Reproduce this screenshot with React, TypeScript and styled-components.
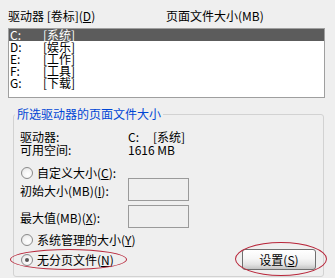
import styled, { createGlobalStyle } from "styled-components";

const GlobalStyle = createGlobalStyle`
  html, body {
    margin: 0;
    padding: 0;
    background: #efefef;
  }
  body {
    font-family: "Noto Sans CJK SC", "Liberation Sans", sans-serif;
    font-size: 12px;
    color: #000000;
  }
`;

const Dialog = styled.div`
  width: 335px;
  height: 278px;
  box-sizing: border-box;
  padding: 9px 10px 0 8px;
  background: #efefef;
`;

const HeaderRow = styled.div`
  display: grid;
  grid-template-columns: 158px 1fr;
  height: 13px;
  line-height: 13px;
  margin-bottom: 6px;
  white-space: nowrap;
`;

const ListBox = styled.div`
  height: 70px;
  box-sizing: border-box;
  border: 1px solid #9f9f9f;
  background: #ffffff;
`;

const ListRow = styled.div<{ $selected?: boolean }>`
  display: grid;
  grid-template-columns: 33px 1fr;
  height: 12px;
  line-height: 12px;
  padding-left: 1px;
  white-space: nowrap;
  background: ${(p) => (p.$selected ? "#5c5c5c" : "transparent")};
  color: ${(p) => (p.$selected ? "#ffffff" : "#000000")};
`;

const Group = styled.fieldset`
  margin: 9px 1px 0 5px;
  padding: 0 7px 6px 6px;
  border: 1px solid #d2d2d2;
  border-radius: 3px;
  min-inline-size: 0;
`;

const GroupTitle = styled.legend`
  margin-left: -5px;
  padding: 0 2px;
  line-height: 14px;
  color: #0046d5;
`;

const InfoGrid = styled.div`
  display: grid;
  grid-template-columns: 108px 1fr;
  grid-auto-rows: 13px;
  line-height: 13px;
  margin-top: 9px;
  white-space: nowrap;
`;

const DriveLetter = styled.span`
  display: inline-block;
  width: 25px;
`;

const RadioRow = styled.div<{ $gap: number }>`
  display: flex;
  align-items: center;
  height: 12px;
  margin-top: ${(p) => p.$gap}px;
`;

const RadioLabel = styled.label`
  position: relative;
  display: flex;
  align-items: center;
  gap: 4px;
  padding-left: 1px;
  line-height: 12px;
  white-space: nowrap;
`;

const RadioCircle = styled.span<{ $checked?: boolean }>`
  position: relative;
  flex: none;
  width: 12px;
  height: 12px;
  box-sizing: border-box;
  border-radius: 50%;
  border: 1px solid #8a8a8a;
  background: radial-gradient(circle at 60% 65%, #ffffff 0%, #f2f2f2 55%, #d8d8d8 100%);

  &::after {
    content: "";
    display: ${(p) => (p.$checked ? "block" : "none")};
    position: absolute;
    left: 3px;
    top: 3px;
    width: 4px;
    height: 4px;
    border-radius: 50%;
    background: #555555;
  }
`;

const SizeBlock = styled.div`
  display: grid;
  grid-template-columns: 108px 61px;
  row-gap: 4px;
  margin-top: -1px;
  align-items: center;
`;

const SizeLabel = styled.span`
  line-height: 12px;
  padding-top: 3px;
  white-space: nowrap;
`;

const SizeInput = styled.div`
  height: 23px;
  box-sizing: border-box;
  border: 1px solid #9a9a9a;
  background: #efefef;
`;

const BottomRow = styled.div`
  display: flex;
  justify-content: space-between;
  align-items: center;
  height: 21px;
  margin-top: 3px;
`;

const SetButton = styled.button`
  position: relative;
  width: 74px;
  height: 21px;
  padding: 0;
  border: 1px solid #6f6f6f;
  border-radius: 3px;
  font-family: inherit;
  font-size: 12px;
  line-height: 12px;
  color: #000000;
  background: linear-gradient(#ffffff 0%, #f6f6f6 45%, #e4e4e4 75%, #c4c4c4 100%);
`;

const Mark = styled.span<{ $l: number; $t: number; $w: number; $h: number }>`
  position: absolute;
  left: ${(p) => p.$l}px;
  top: ${(p) => p.$t}px;
  width: ${(p) => p.$w}px;
  height: ${(p) => p.$h}px;
  box-sizing: border-box;
  border: 1px solid #b8263a;
  border-radius: 50%;
  pointer-events: none;
`;

const drives = [
  { letter: "C:", label: "[系统]" },
  { letter: "D:", label: "[娱乐]" },
  { letter: "E:", label: "[工作]" },
  { letter: "F:", label: "[工具]" },
  { letter: "G:", label: "[下载]" },
];

export default function App() {
  return (
    <>
      <GlobalStyle />
      <Dialog>
        <HeaderRow>
          <span>
            驱动器 [卷标](<u>D</u>)
          </span>
          <span>页面文件大小(MB)</span>
        </HeaderRow>
        <ListBox>
          {drives.map((d, i) => (
            <ListRow key={d.letter} $selected={i === 0}>
              <span>{d.letter}</span>
              <span>{d.label}</span>
            </ListRow>
          ))}
        </ListBox>

        <Group>
          <GroupTitle>所选驱动器的页面文件大小</GroupTitle>
          <InfoGrid>
            <span>驱动器:</span>
            <span>
              <DriveLetter>C:</DriveLetter>[系统]
            </span>
            <span>可用空间:</span>
            <span>1616 MB</span>
          </InfoGrid>

          <RadioRow $gap={11}>
            <RadioLabel>
              <RadioCircle />
              <span>
                自定义大小(<u>C</u>):
              </span>
            </RadioLabel>
          </RadioRow>

          <SizeBlock>
            <SizeLabel>
              初始大小(MB)(<u>I</u>):
            </SizeLabel>
            <SizeInput />
            <SizeLabel>
              最大值(MB)(<u>X</u>):
            </SizeLabel>
            <SizeInput />
          </SizeBlock>

          <RadioRow $gap={6}>
            <RadioLabel>
              <RadioCircle />
              <span>
                系统管理的大小(<u>Y</u>)
              </span>
            </RadioLabel>
          </RadioRow>

          <BottomRow>
            <RadioLabel>
              <RadioCircle $checked />
              <span>
                无分页文件(<u>N</u>)
              </span>
              <Mark $l={-10} $t={-5} $w={117} $h={21} />
            </RadioLabel>
            <SetButton>
              设置(<u>S</u>)
              <Mark $l={-8} $t={-8} $w={92} $h={34} />
            </SetButton>
          </BottomRow>
        </Group>
      </Dialog>
    </>
  );
}
